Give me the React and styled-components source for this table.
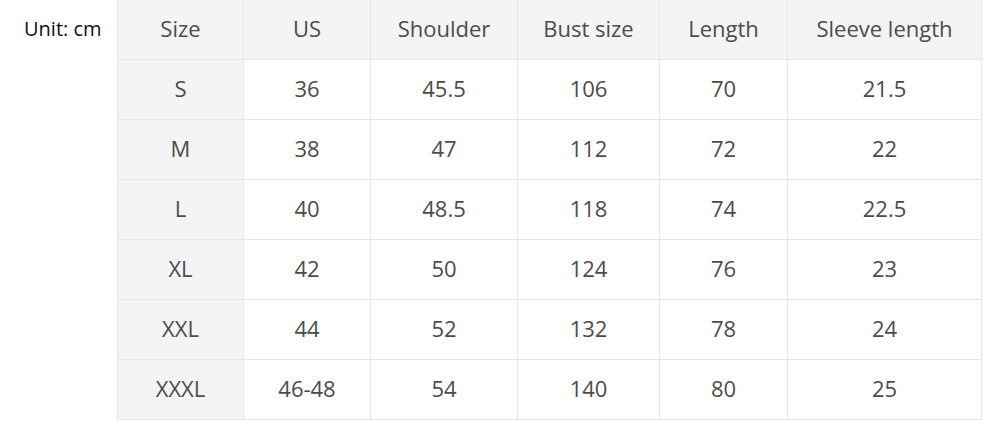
import styled, { createGlobalStyle } from 'styled-components';

const GlobalStyle = createGlobalStyle`
  html, body {
    margin: 0;
    padding: 0;
    background: #ffffff;
  }
  body {
    font-family: "Open Sans", "Noto Sans", sans-serif;
  }
`

const Page = styled.div`
  display: flex;
  align-items: flex-start;
  width: 985px;
  height: 421px;
  overflow: hidden;
`

const Unit = styled.div`
  width: 117px;
  height: 57px;
  display: flex;
  align-items: center;
  padding-left: 24px;
  box-sizing: border-box;
  font-size: 20px;
  color: #111;
`

const Table = styled.table`
  border-collapse: collapse;
  table-layout: fixed;
  width: 864px;
  margin-top: -1px;
`

const Cell = styled.td`
  height: 60px;
  padding: 0 0 3px;
  box-sizing: border-box;
  border: 1px solid #e6e6e6;
  text-align: center;
  vertical-align: middle;
  font-size: 22px;
  color: #4c4c4c;
  background: ${({ $shade }) => ($shade ? '#f4f4f4' : '#ffffff')};
`

const widths = [126, 127, 147, 142, 128, 194]
const head = ['Size', 'US', 'Shoulder', 'Bust size', 'Length', 'Sleeve length']
const rows = [
  ['S', '36', '45.5', '106', '70', '21.5'],
  ['M', '38', '47', '112', '72', '22'],
  ['L', '40', '48.5', '118', '74', '22.5'],
  ['XL', '42', '50', '124', '76', '23'],
  ['XXL', '44', '52', '132', '78', '24'],
  ['XXXL', '46-48', '54', '140', '80', '25'],
]

const App = () => {
  return (
    <>
      <GlobalStyle />
      <Page>
        <Unit>Unit: cm</Unit>
        <Table>
          <colgroup>
            {widths.map((w, i) => <col key={i} style={{ width: w }} />)}
          </colgroup>
          <tbody>
            <tr>
              {head.map(h => <Cell key={h} $shade>{h}</Cell>)}
            </tr>
            {rows.map(r => (
              <tr key={r[0]}>
                {r.map((v, i) => <Cell key={i} $shade={i === 0}>{v}</Cell>)}
              </tr>
            ))}
          </tbody>
        </Table>
      </Page>
    </>
  );
}

export default App;
